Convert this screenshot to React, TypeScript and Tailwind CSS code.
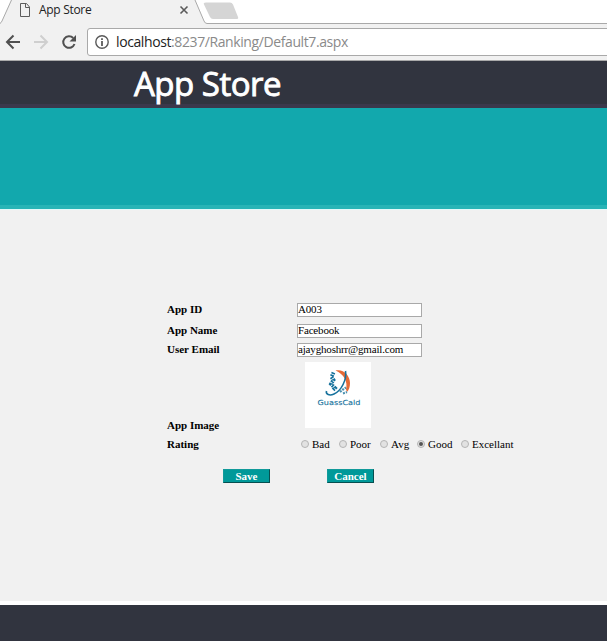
import React from 'react';

function TabStrip() {
  return (
    <div className="relative h-[24px] bg-white">
      <svg className="block" width="607" height="24" viewBox="0 0 607 24" fill="none">
        <path d="M0 24 L0 23.5 L2 21 L11 0 H195 L204 21 Q205 23.5 207 23.5 V24 Z" fill="#f1f1f1" />
        <path d="M0 23.5 Q1 23 2 21 L11.5 0 M195 0 L204 21 Q205 23.5 207 23.5 H607" stroke="#a9a9a9" />
        <path d="M206 2.5 H230 Q232 2.5 233 4.5 L238 17 Q239 19 236 19 H213 Q211 19 210 17 L204 4.5 Q203 2.5 206 2.5Z" fill="#d5d5d5" />
        <path d="M20.5 3.5 H26.5 L29.5 7 V16.5 H20.5 Z M25.5 3.5 V7.5 H29.5" stroke="#5c5c5c" />
        <path d="M180.5 6.5 L187.5 13.5 M187.5 6.5 L180.5 13.5" stroke="#5a5a5a" strokeWidth="1.6" />
      </svg>
      <span className="absolute left-[39px] top-[2px] text-[12px] leading-[16px] tracking-[-0.3px] whitespace-nowrap font-['Open_Sans',sans-serif] text-[#222]">
        App Store
      </span>
    </div>
  );
}

function Toolbar() {
  return (
    <div className="flex h-[36px] bg-[#f1f1f1] pt-[4px]">
      <svg className="shrink-0" width="87" height="28" viewBox="0 0 87 28" fill="none">
        <path d="M20 14 H7.5 M13.5 7.5 L7 14 L13.5 20.5" stroke="#505050" strokeWidth="2" />
        <path d="M34 14 H47 M40.5 7.5 L47 14 L40.5 20.5" stroke="#cfcfcf" strokeWidth="2" />
        <path d="M74.5 16 A5.8 5.8 0 1 1 73.2 10" stroke="#505050" strokeWidth="2" />
        <path d="M76 7 V13.5 H69.5 Z" fill="#505050" />
      </svg>
      <div className="-mr-[4px] flex h-[28px] flex-1 items-center rounded-l-[3px] border border-[#a9a9a9] bg-white pl-[7px]">
        <svg width="14" height="14" viewBox="0 0 14 14" fill="none">
          <circle cx="7" cy="7" r="6.2" stroke="#5a5a5a" strokeWidth="1.4" />
          <path d="M7 3.2 V5 M7 6 V11" stroke="#5a5a5a" strokeWidth="1.8" />
        </svg>
        <span className="ml-[7px] text-[14px] leading-[20px] tracking-[-0.4px] whitespace-nowrap font-['Open_Sans',sans-serif] text-[#8a8a8a]">
          <span className="text-[#222]">localhost</span>:8237/Ranking/Default7.aspx
        </span>
      </div>
    </div>
  );
}

function AppLogo() {
  return (
    <svg className="ml-[8px] block bg-white" width="66" height="66" viewBox="0 0 66 66" fill="none">
      <path d="M30.5 8.5 C38 6.5 45 13 45 21 C45 25 44 28 42 30 L41 27.5 C43 20 39 12 30.5 8.5 Z" fill="#e56a36" />
      <path d="M40.5 9 C42 18 36 29 29 32 C24.5 34 20.5 32.5 21.5 29" stroke="#16719c" strokeWidth="1.6" />
      <path d="M28.5 10.5 L26.5 15 L28.5 18 L26 22 L30 26 L28 28" stroke="#16719c" strokeWidth="3.8" strokeDasharray="1.6 0.9" />
      <path d="M35 30 L38 27.5 L41 25.5 M38 31.5 L42 30" stroke="#4b91b0" strokeWidth="2.2" strokeDasharray="2 1" />
      <text x="12.5" y="43" textLength="43" lengthAdjust="spacingAndGlyphs" className="fill-[#16719c] stroke-[#16719c] stroke-[0.1] font-['DejaVu_Sans',sans-serif] text-[7px]">GuassCald</text>
    </svg>
  );
}

function Field({ label, value, className }: { label: string; value: string; className: string }) {
  return (
    <div className={`flex h-[14px] ${className}`}>
      <label className="w-[130px] font-bold leading-[13px]">{label}</label>
      <div className="w-[125px] whitespace-nowrap border border-[#a9a9a9] bg-white leading-[11px] tracking-[-0.17px]">{value}</div>
    </div>
  );
}

function RatingOption({ label, width, checked = false }: { label: string; width: string; checked?: boolean }) {
  return (
    <span className={`flex shrink-0 items-center whitespace-nowrap ${width}`}>
      <span className="mr-[3px] flex h-[8px] w-[8px] items-center justify-center rounded-full border border-[#b5b5b5] bg-[#e2e2e2]">
        {checked && <span className="h-[4px] w-[4px] rounded-full bg-[#555]" />}
      </span>
      {label}
    </span>
  );
}

function ActionButton({ label }: { label: string }) {
  return (
    <button className="h-[14px] w-[47px] border border-t-[#119a9a] border-l-[#119a9a] border-r-[#064f50] border-b-[#064f50] bg-[#009999] text-center font-bold leading-[11px] text-white">
      {label}
    </button>
  );
}

export default function App() {
  return (
    <div className="h-[641px] w-[607px] overflow-hidden bg-white">
      <TabStrip />
      <Toolbar />
      <header className="h-[48px] border-t border-b-4 border-t-[#aaaaaa] border-b-[#3b384b] bg-[#31343f] pl-[134px]">
        <h1 className="whitespace-nowrap font-['Open_Sans',sans-serif] text-[33px] font-normal leading-[46px] tracking-[-0.5px] text-white [-webkit-text-stroke:0.9px_white]">App Store</h1>
      </header>
      <div className="h-[101px] border-b-4 border-[#28b4b6] bg-[#12a8ad]" />
      <main className="h-[392px] border-t border-[#e3fafa] bg-[#f1f1f1] pl-[167px] pt-[93px] font-['Liberation_Serif',serif] text-[11px] text-black">
        <Field label="App ID" value="A003" className="" />
        <Field label="App Name" value="Facebook" className="mt-[7px]" />
        <Field label="User Email" value="ajayghoshrr@gmail.com" className="mt-[5px]" />
        <div className="mt-[5px] flex h-[66px]">
          <div className="flex w-[130px] items-end font-bold leading-[14px]"><span className="-mb-[4px]">App Image</span></div>
          <AppLogo />
        </div>
        <div className="mt-[9px] flex h-[14px] items-center">
          <span className="w-[134px] shrink-0 font-bold">Rating</span>
          <RatingOption label="Bad" width="w-[38px]" />
          <RatingOption label="Poor" width="w-[41px]" />
          <RatingOption label="Avg" width="w-[37px]" />
          <RatingOption label="Good" width="w-[44px]" checked />
          <RatingOption label="Excellant" width="w-[60px]" />
        </div>
        <div className="mt-[18px] flex gap-[57px] pl-[56px]">
          <ActionButton label="Save" />
          <ActionButton label="Cancel" />
        </div>
      </main>
      <footer className="mt-[4px] h-[36px] bg-[#31343f]" />
    </div>
  );
}
